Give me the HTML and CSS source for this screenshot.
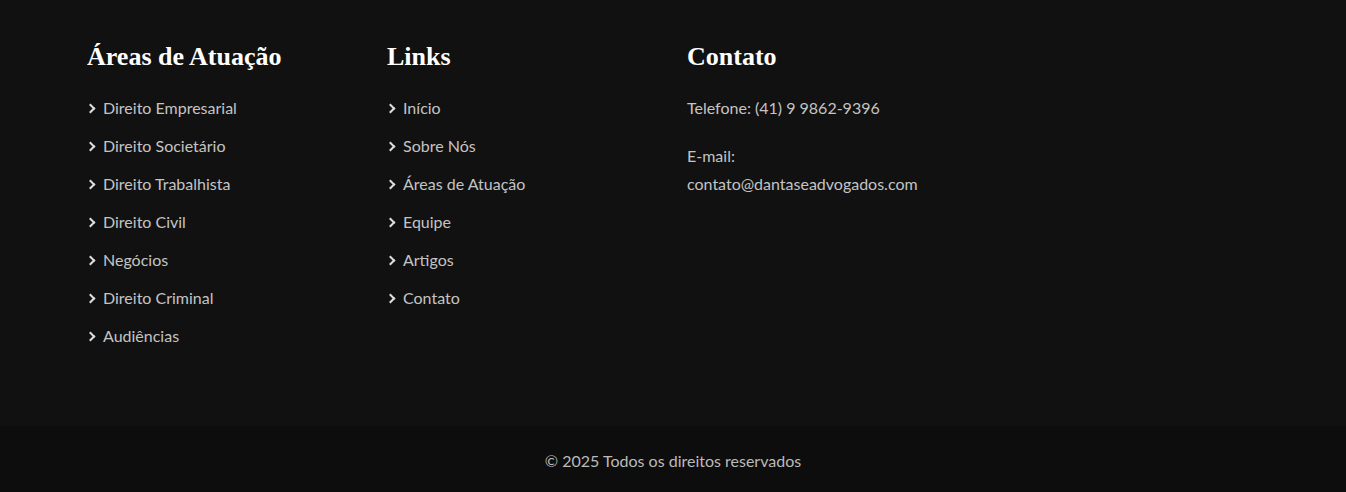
FILE: index.html
```html
<!DOCTYPE html>
<html lang="pt-BR">

<head>
  <meta charset="UTF-8" />
  <meta name="viewport" content="width=device-width, initial-scale=1.0" />
  <title>Dantas e Advogados</title>
  <link rel="stylesheet" href="styles.css">
</head>

<body>
  <footer class="site-footer">
    <div class="footer-main">
      <div class="footer-col">
        <h3>Áreas de Atuação</h3>
        <ul class="footer-links">
          <li><span class="chev"></span>Direito Empresarial</li>
          <li><span class="chev"></span>Direito Societário</li>
          <li><span class="chev"></span>Direito Trabalhista</li>
          <li><span class="chev"></span>Direito Civil</li>
          <li><span class="chev"></span>Negócios</li>
          <li><span class="chev"></span>Direito Criminal</li>
          <li><span class="chev"></span>Audiências</li>
        </ul>
      </div>

      <div class="footer-col">
        <h3>Links</h3>
        <ul class="footer-links">
          <li><span class="chev"></span>Início</li>
          <li><span class="chev"></span>Sobre Nós</li>
          <li><span class="chev"></span>Áreas de Atuação</li>
          <li><span class="chev"></span>Equipe</li>
          <li><span class="chev"></span>Artigos</li>
          <li><span class="chev"></span>Contato</li>
        </ul>
      </div>

      <div class="footer-col">
        <h3>Contato</h3>
        <p>Telefone: (41) 9 9862-9396</p>
        <p>E-mail:<br>contato@dantaseadvogados.com</p>
      </div>

      <div class="footer-col"></div>
    </div>

    <div class="footer-bottom">
      <p>&copy; 2025 Todos os direitos reservados</p>
    </div>
  </footer>
</body>

</html>
```

FILE: styles.css
```css
body {
  margin: 0;
  background-color: #111;
  font-family: Lato, "Open Sans", sans-serif;
  color: #c4c4c4;
}

.site-footer {
  background-color: #111;
}

.footer-main {
  max-width: 1200px;
  margin: 0 auto;
  padding: 40px 0 66px;
  display: grid;
  grid-template-columns: repeat(4, 300px);
}

.footer-col {
  padding-left: 14px;
}

.footer-col h3 {
  margin: 0 0 20px;
  font-family: "Liberation Serif", "DejaVu Serif", serif;
  font-size: 26px;
  font-weight: bold;
  line-height: 34px;
  color: #fff;
}

.footer-links {
  list-style: none;
  margin: 0;
  padding: 0;
}

.footer-links li {
  font-size: 16px;
  line-height: 28px;
  margin-bottom: 10px;
  display: flex;
  align-items: center;
}

.chev {
  width: 5px;
  height: 5px;
  border-top: 2px solid #ddd;
  border-right: 2px solid #ddd;
  transform: rotate(45deg);
  margin: 0 9px 0 0;
}

.footer-col p {
  margin: 0 0 20px;
  font-size: 16px;
  line-height: 28px;
}

.footer-bottom {
  background-color: #0d0d0d;
  padding: 21px 0 17px;
  text-align: center;
}

.footer-bottom p {
  margin: 0;
  font-size: 16px;
  line-height: 28px;
  color: #bbb;
}
```
